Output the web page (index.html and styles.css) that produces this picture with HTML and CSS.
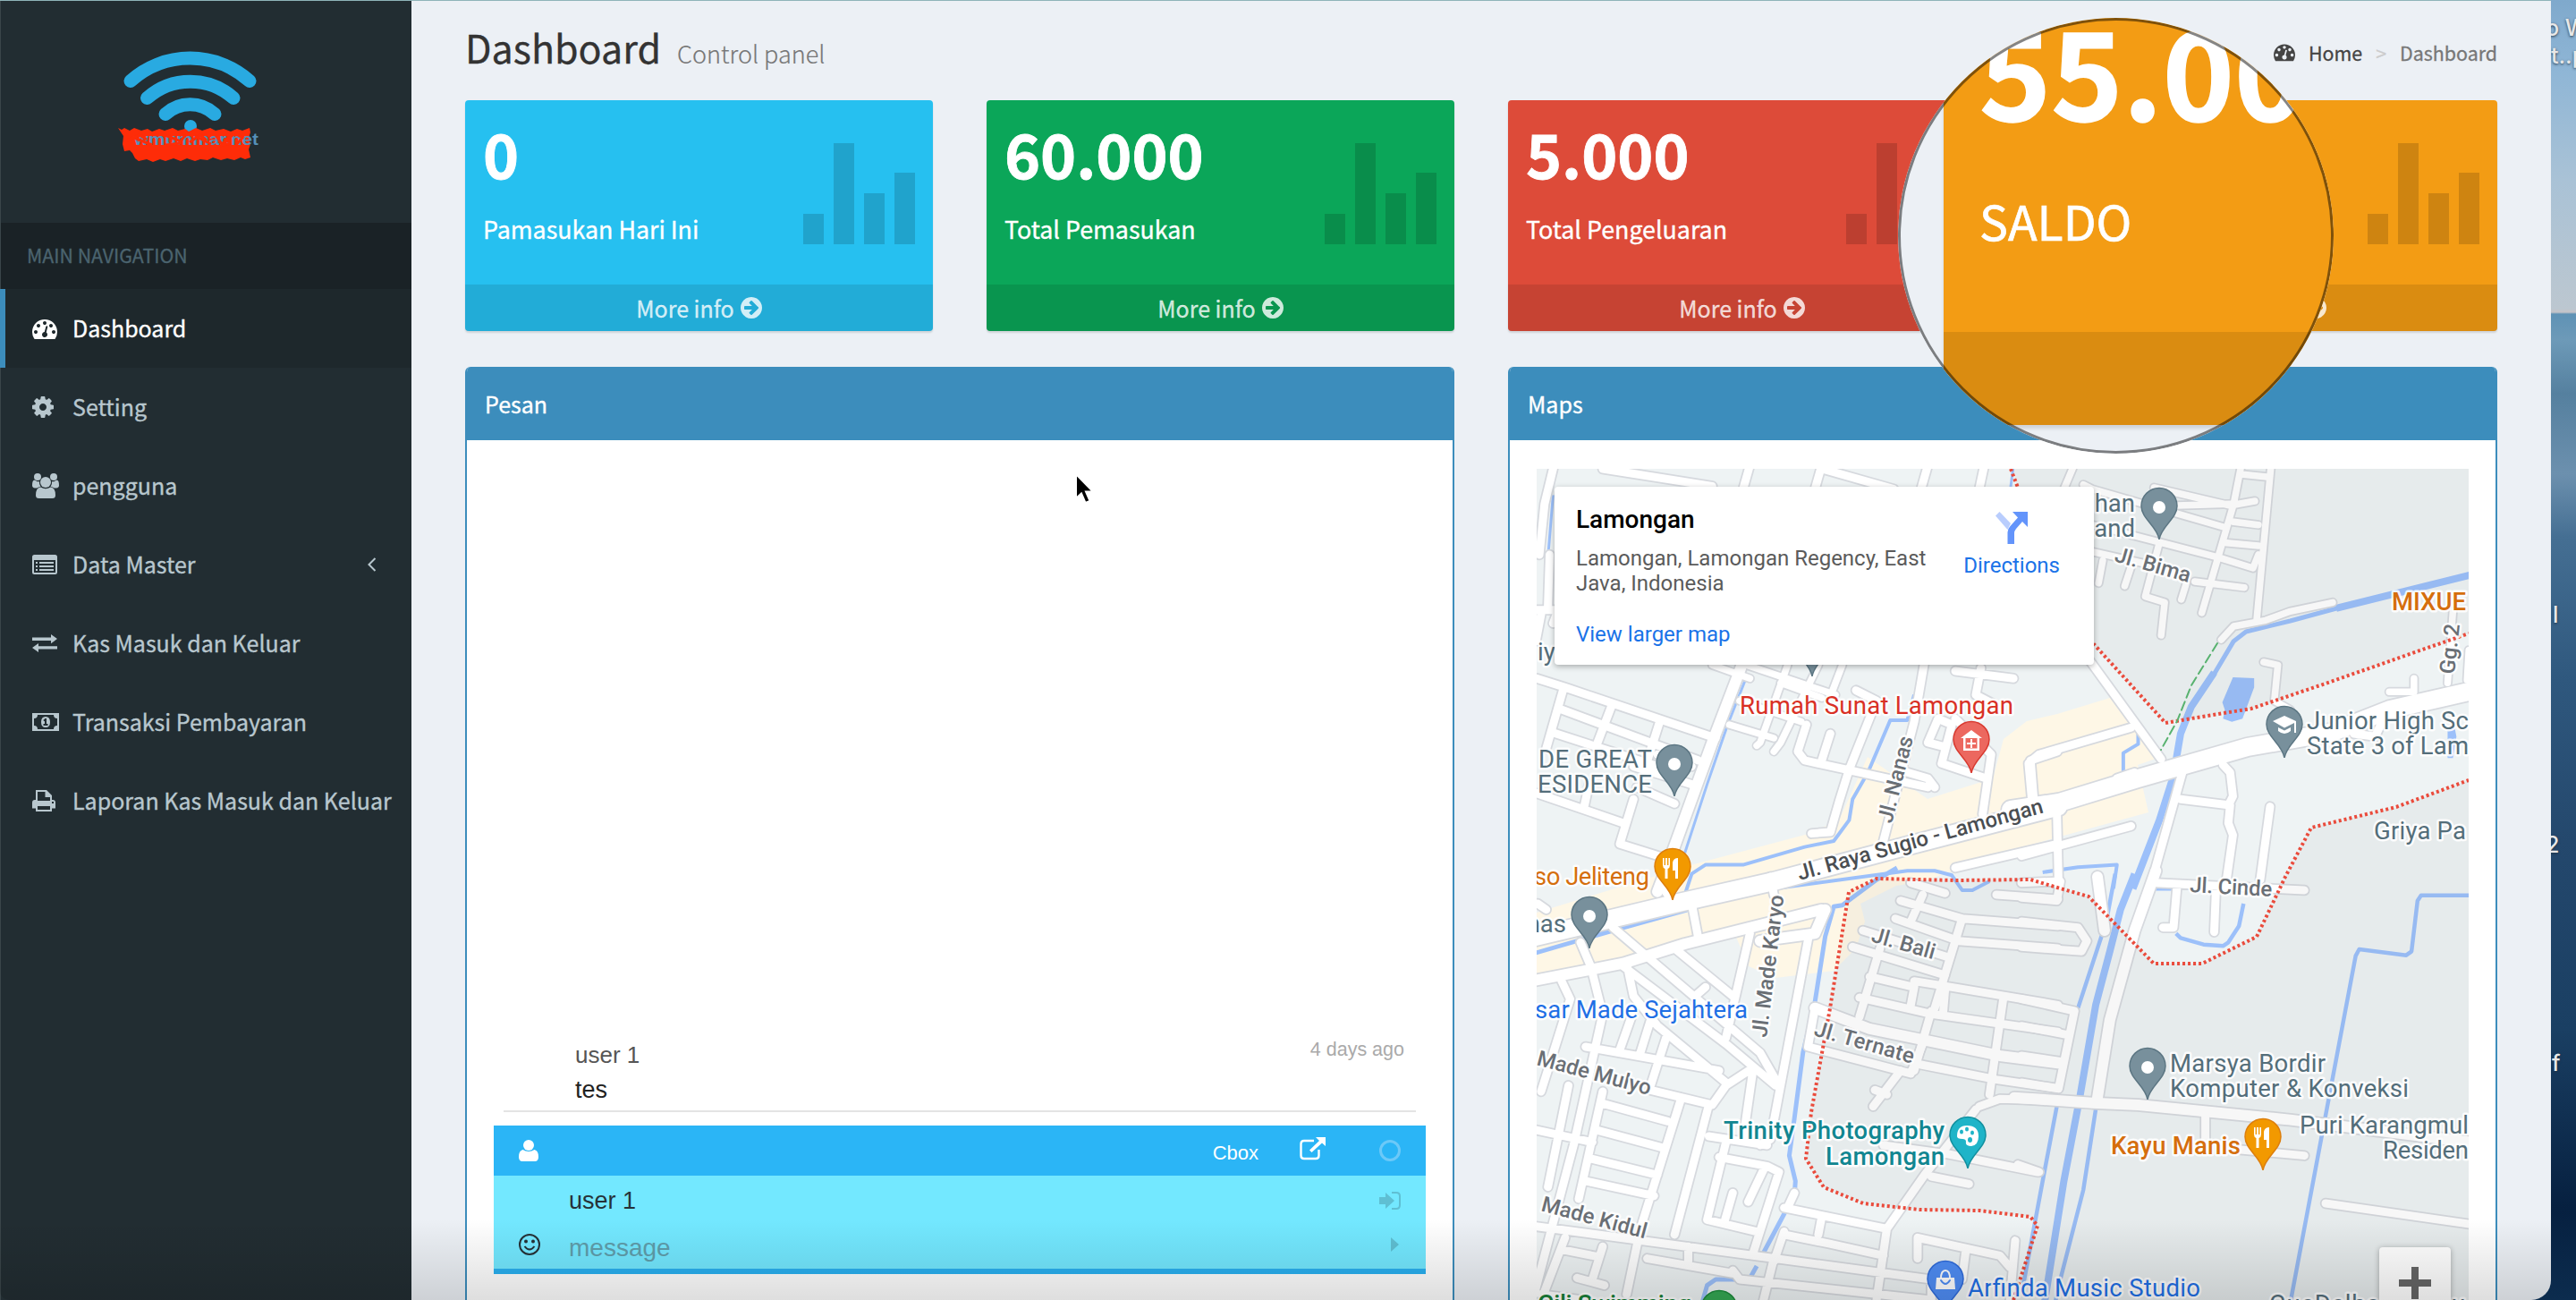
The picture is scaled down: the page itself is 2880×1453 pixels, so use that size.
FILE: index.html
```html
<!DOCTYPE html>
<html lang="id">
<head>
<meta charset="utf-8">
<title>Dashboard</title>
<link rel="stylesheet" href="styles.css">
</head>
<body>
<svg class="defs" width="0" height="0">
  <symbol id="i-tach" viewBox="0 0 1792 1792"><path d="M384 1152q0-53-37.5-90.5t-90.5-37.5-90.5 37.5-37.5 90.5 37.5 90.5 90.5 37.5 90.5-37.5 37.5-90.5zm192-448q0-53-37.5-90.5t-90.5-37.5-90.5 37.5-37.5 90.5 37.5 90.5 90.5 37.5 90.5-37.5 37.5-90.5zm428 481l101-382q6-26-7.5-48.5t-38.5-29.5-48 6.5-30 39.5l-101 382q-60 5-107 43.5t-63 98.5q-20 77 20 146t117 89 146-20 89-117q16-60-6-117t-72-91zm660-33q0-53-37.5-90.5t-90.5-37.5-90.5 37.5-37.5 90.5 37.5 90.5 90.5 37.5 90.5-37.5 37.5-90.5zm-640-640q0-53-37.5-90.5t-90.5-37.5-90.5 37.5-37.5 90.5 37.5 90.5 90.5 37.5 90.5-37.5 37.5-90.5zm448 192q0-53-37.5-90.5t-90.5-37.5-90.5 37.5-37.5 90.5 37.5 90.5 90.5 37.5 90.5-37.5 37.5-90.5zm320 448q0 261-141 483-19 29-54 29h-1402q-35 0-54-29-141-221-141-483 0-182 71-348t191-286 286-191 348-71 348 71 286 191 191 286 71 348z"/></symbol>
  <symbol id="i-cog" viewBox="128 0 1792 1792"><path d="M1152 896q0-106-75-181t-181-75-181 75-75 181 75 181 181 75 181-75 75-181zm512-109v222q0 12-8 23t-20 13l-185 28q-19 54-39 91 35 50 107 138 10 12 10 25t-9 23q-27 37-99 108t-94 71q-12 0-26-9l-138-108q-44 23-91 38-16 136-29 186-7 28-36 28h-222q-14 0-24.5-8.5t-11.5-21.5l-28-184q-49-16-90-37l-141 107q-10 9-25 9-14 0-25-11-126-114-165-168-7-10-7-23 0-12 8-23 15-21 51-66.5t54-70.5q-27-50-41-99l-183-27q-13-2-21-12.5t-8-23.5v-222q0-12 8-23t19-13l186-28q14-46 39-92-40-57-107-138-10-12-10-24 0-10 9-23 26-36 98.500-107.500t94.500-71.500q13 0 26 10l138 107q44-23 91-38 16-136 29-186 7-28 36-28h222q14 0 24.500 8.500t11.500 21.500l28 184q49 16 90 37l142-107q9-9 24-9 13 0 25 10 129 119 165 170 7 8 7 22 0 12-8 23-15 21-51 66.500t-54 70.500q26 50 41 98l183 28q13 2 21 12.500t8 23.500z"/></symbol>
  <symbol id="i-go" viewBox="128 128 1536 1536"><path d="M1413 896q0-27-18-45l-91-91-362-362q-18-18-45-18t-45 18l-91 91q-18 18-18 45t18 45l189 189h-502q-26 0-45 19t-19 45v128q0 26 19 45t45 19h502l-189 189q-19 19-19 45t19 45l91 91q18 18 45 18t45-18l362-362 91-91q18-18 18-45zm251 0q0 209-103 385.5t-279.5 279.5-385.5 103-385.5-103-279.5-279.5-103-385.5 103-385.500 279.500-279.500 385.500-103 385.500 103 279.500 279.500 103 385.500z"/></symbol>
  <symbol id="i-users" viewBox="0 0 30 28"><circle cx="6" cy="4" r="4"/><circle cx="24" cy="4" r="4"/><path d="M4.500 8.500Q6 9.600 8 9.300Q7.500 12.500 9.500 15Q7 15 5.500 16.500H3Q0 16 0 13.500Q0 7.500 2.500 7.500zM25.500 8.500Q24 9.600 22 9.300Q22.500 12.500 20.500 15Q23 15 24.500 16.500H27Q30 16 30 13.500Q30 7.500 27.500 7.500z"/><circle cx="15" cy="10" r="6"/><path d="M9.500 15.500Q15 19 20.500 15.500Q26 16 26 24.500Q26 28 22.500 28H7.500Q4 28 4 24.500Q4 16 9.500 15.500z"/></symbol>
  <symbol id="i-list" viewBox="0 0 28 22"><path fill-rule="evenodd" d="M2.500 0h23Q28 0 28 2.500v17Q28 22 25.500 22h-23Q0 22 0 19.500v-17Q0 0 2.500 0zM2 6v13.500q0 .5.5.5h23q.5 0 .5-.5V6z"/><path d="M4 8h2v2H4zM4 12h2v2H4zM4 16h2v2H4zM8 8h16v2H8zM8 12h16v2H8zM8 16h16v2H8z"/></symbol>
  <symbol id="i-swap" viewBox="0 0 28 20"><path d="M0 3.500h21V0l7 5-7 5.200V7H0zM28 13.200H7V10l-7 5 7 5v-3.500h21z"/></symbol>
  <symbol id="i-money" viewBox="0 0 30 20"><path fill-rule="evenodd" d="M0 0h30v20H0zM6 2A4 4 0 0 1 2 6v8A4 4 0 0 1 6 18h18A4 4 0 0 1 28 14V6A4 4 0 0 1 24 2zM15 4q5 0 5 6t-5 6-5-6 5-6zM12.500 12v2h5v-2H16V6h-1.500L12.300 8l1.200 1.300.5-.4V12z"/></symbol>
  <symbol id="i-print" viewBox="0 0 26 24"><path fill-rule="evenodd" d="M4 0h12l6 6v5h1q3 0 3 3v6.500h-4V24H4v-3.500H0V14q0-3 3-3h1zM6 2v10h14V8h-5.500V2zM6 18v4h14v-4zM22 13v2h2v-2z"/></symbol>
  <symbol id="i-pin" viewBox="-22 -60 44 62" overflow="visible"><path d="M0 0C-2-15-20-23-20-37.500A20 20 0 0 1 20-37.500C20-23 2-15 0 0Z"/></symbol>
  <symbol id="i-fork" viewBox="0 0 20 24" overflow="visible"><path fill="#fff" d="M1 0h1.600v8H4V0h2v8h1.400V0H9v8q0 3-2.500 4v11h-3V12Q1 11 1 8zM18 0v23h-3v-9h-3V5q1-5 6-5z"/></symbol>
</svg>

<div class="screen">
  <aside class="sidebar">
    <div class="brand">
      <svg viewBox="0 0 180 130" width="180" height="130">
        <g fill="none" stroke="#29aae1" stroke-width="15" stroke-linecap="round"><path d="M26 39.500A99.700 99.700 0 0 1 159 39.500"/><path d="M44.500 58.500A72.600 72.600 0 0 1 141 58.500"/><path d="M65 76.500A40.700 40.700 0 0 1 120 76.500"/></g>
        <circle cx="93" cy="90" r="7" fill="#29aae1"/>
        <path fill="#fe2c08" d="M12 92l4 2 3-2 6 3 5-3 8 3 7-2 5 3 8-3 6 2 9-3 6 3 8-2 4 3 8-4 7 3 9-3 6 3 9-2 8 3 7-3 6 2 8-3 1 5-2 6 2 7-2 6 2 9-6 2-5-2-7 3-8-2-7 2-9-3-6 3-8-1-6 2-9-3-7 3-8-3-9 3-6-2-8 3-7-3-9 2-4-3-3-6-3-3-6 1-2-8 1-9z"/>
        <text x="30" y="111" class="brand-name" textLength="139" lengthAdjust="spacingAndGlyphs">wmummar.net</text>
        <g stroke="#fe2c08" stroke-width="3" fill="none"><path d="M22 106l14-6 8 5M62 99l20 8 5-7M92 108l12-8 7 6M121 100l7 10 12-10M126 112l12-3M143 98l8 5-7 8M30 103l20 8M66 111l16-2M98 101l18 9"/></g>
      </svg>
    </div>
    <div class="nav-head">MAIN NAVIGATION</div>
    <nav>
      <a class="active"><svg class="tach"><use href="#i-tach"/></svg><span>Dashboard</span></a>
      <a><svg><use href="#i-cog"/></svg><span>Setting</span></a>
      <a><svg class="w30"><use href="#i-users"/></svg><span>pengguna</span></a>
      <a><svg class="h22"><use href="#i-list"/></svg><span>Data Master</span><svg class="caret" viewBox="0 0 10 16"><path d="M8.500 1L1.500 8l7 7" fill="none" stroke="currentColor" stroke-width="2"/></svg></a>
      <a><svg class="h20"><use href="#i-swap"/></svg><span>Kas Masuk dan Keluar</span></a>
      <a><svg class="w30 h20"><use href="#i-money"/></svg><span>Transaksi Pembayaran</span></a>
      <a><svg class="w26"><use href="#i-print"/></svg><span>Laporan Kas Masuk dan Keluar</span></a>
    </nav>
  </aside>

  <main>
    <header>
      <h1>Dashboard</h1><small>Control panel</small>
      <div class="crumbs"><svg><use href="#i-tach"/></svg><b>Home</b><i>&gt;</i><span>Dashboard</span></div>
    </header>
    <section class="cards">
      <article class="card aqua"><div class="inner"><h3>0</h3><p>Pamasukan Hari Ini</p><div class="bars"><i></i><i></i><i></i><i></i></div></div><footer>More info <svg><use href="#i-go"/></svg></footer></article>
      <article class="card green"><div class="inner"><h3>60.000</h3><p>Total Pemasukan</p><div class="bars"><i></i><i></i><i></i><i></i></div></div><footer>More info <svg><use href="#i-go"/></svg></footer></article>
      <article class="card red"><div class="inner"><h3>5.000</h3><p>Total Pengeluaran</p><div class="bars"><i></i><i></i><i></i><i></i></div></div><footer>More info <svg><use href="#i-go"/></svg></footer></article>
      <article class="card orange"><div class="inner"><div class="bars"><i></i><i></i><i></i><i></i></div></div><footer><span class="ghost">More info</span> <svg><use href="#i-go"/></svg></footer></article>
    </section>
    <section class="panels">
      <article class="panel">
        <h2>Pesan</h2>
        <div class="chat">
          <div class="msg"><div><p class="who">user 1</p><p class="body">tes</p></div><time>4 days ago</time></div>
          <div class="chatbar">
            <svg class="person" viewBox="0 0 22 24"><circle cx="11" cy="6" r="6"/><path d="M4.500 11Q11 15 17.500 11Q22 12 22 19Q22 24 18 24H4Q0 24 0 19Q0 12 4.500 11z"/></svg>
            <span>Cbox</span>
            <svg class="ext" viewBox="0 0 29 26"><path d="M16 4H5Q1.500 4 1.500 7.500v13Q1.500 24 5 24h13q3.500 0 3.500-3.500V14" fill="none" stroke="#fff" stroke-width="2.400"/><path d="M18 0h11v10l-4-3.500L13.500 17 11 14.500 22 4z"/></svg>
            <svg class="ring" viewBox="0 0 24 24"><circle cx="12" cy="12" r="10.500" fill="none" stroke="#6cc9f8" stroke-width="3"/></svg>
          </div>
          <div class="compose">
            <div class="row name"><span>user 1</span><svg width="24" height="20" viewBox="0 0 24 20"><path d="M0 6h7V1l10 9-10 9v-5H0z"/><path d="M14 1h5q4 0 4 4v10q0 4-4 4h-5" fill="none" stroke="#5fbfd3" stroke-width="2"/></svg></div>
            <div class="row text"><svg class="smile" width="24" height="24" viewBox="0 0 24 24"><g fill="none" stroke="#263238" stroke-width="2"><circle cx="12" cy="12" r="11"/><path d="M6.500 14q5.500 7 11 0"/></g><circle cx="8" cy="8.500" r="2" fill="#263238"/><circle cx="16" cy="8.500" r="2" fill="#263238"/></svg><span>message</span><svg class="send" width="10" height="16" viewBox="0 0 10 16"><path d="M0 0l9 8-9 8z"/></svg></div>
          </div>
        </div>
      </article>
      <article class="panel">
        <h2>Maps</h2>
        <div class="map">
          <svg class="tiles" viewBox="1718 524 1042 929" width="1042" height="929">
            <defs>
              <g id="roads">
                <g transform="matrix(.3827 0 0 .3333 1700 510)">
                  <path class="m" d="M95 42L70 160 55 330M85 330L80 500M240 42L560 100M670 30L650 110M880 30L860 110M890 45L1090 110M1190 30L1170 110M1355 30L1340 110M40 515H110L95 560M60 530L45 620"/>
                  <path class="m" d="M47 745L130 775 570 945M125 780L75 980M110 845L520 1020M90 925L400 1040M265 840L225 960M405 895L365 1040M400 1000L500 1040M330 1040L500 1100M47 1130L300 1230M200 1100L185 1180M330 1150L290 1300 430 1350M340 1110L450 1165"/>
                  <path class="w" d="M650 690L560 960 430 1370 400 1460"/>
                  <path class="s" d="M560 700L670 745M660 700L920 800M780 700L700 960 690 970M870 700L760 960 740 990M640 820L820 890M610 900L740 945M940 700L910 790M760 760L880 810"/>
                  <path class="m" d="M980 785L1040 820 960 1050 930 1160 905 1260 850 1265M835 900L810 990 830 1020 1190 1110M905 930L880 1020M1210 1110L1190 1080 1130 1060M1180 690L1150 890 1060 1290M1190 960L1220 880 1260 900 1230 1030 1360 1080M1190 960L1240 975M1270 720L1440 745M1345 710L1330 800 1380 830M1270 880L1375 1000 1350 1200M1500 1160L1490 1020 1568 990M1270 1380L1568 1300"/>
                </g>
                <g transform="matrix(.3954 0 0 .3333 2260 510)">
                  <path class="s" d="M145 40L120 110M620 40L600 160 510 525M705 40L665 550M620 60L700 70M375 105L590 165 660 150M440 165L590 160M175 95L200 110 580 240M600 220L670 230M580 290L670 300M200 230L560 340 655 375 670 330M200 320L350 360M390 290L350 470 405 490 395 600M230 350L218 425M310 370L292 435M465 430L452 480M490 420L630 440M565 615L600 570 690 550 760 520 880 490M685 690L725 700 715 820 760 850M1220 520L1205 760M1265 650L1260 750M1040 790H1110V745"/>
                  <path class="m" d="M190 680L395 1015M30 1160L20 1030 50 1000 310 910M270 1080L320 1060M100 1180L105 1440M0 1340L310 1240M455 1060L365 1440M570 1035L590 1060 598 1140 585 1170M450 1150L590 1170 585 1230 598 1270 580 1420M703 1175L675 1420M940 930L1000 940 1020 890"/>
                  <path class="l" d="M-30 1185L110 1160 330 1080 640 975 880 925 1040 850 1280 785"/>
                </g>
                <g transform="matrix(.3827 0 0 .3333 1700 980)">
                  <path class="l" d="M30 205L250 145 470 85 740 15 1100-95 1570-235"/>
                  <path class="w" d="M30 350L300 290 480 225 880 110M700 215L860 190 890 110"/>
                  <path class="m" d="M500 90L520 210M175 220L205 300 240 460 155 900 40 1400M730 0L740 60M270 170L700 590 745 680M310 290L330 400 400 500 600 690M450 240L620 400M300 300L600 560 745 700M540 370L510 400M670 190L600 540M840 210L730 880 700 900M410 25L430 60M50 90L75 110M120 350L145 410 60 720M330 450L290 580M380 480L350 590M425 540L380 700M190 570L580 650M380 715L560 765 600 700 680 640 650 880M30 845L210 890M140 700L80 1040M240 760L430 820M225 850L420 910M205 945L400 1000M190 1020L390 1070M240 720L170 1080M470 740L350 1180 310 1400M550 765L450 1200M550 870L720 900M600 890L545 1150 690 1190M580 940L720 970 755 990 680 1260M715 970L665 1090M620 1060L595 1160M30 1170L1200 1350 1200 1419M130 1210L70 1390M120 1250L230 1275M240 1240L210 1350M165 1345L245 1370M490 1240V1290M740 1280L710 1419M770 1190L740 1290M770 1200L900 1230 1060 1270M770 1110L1070 1180 1040 1419M800 1060L780 1110M880 1140L870 1200M1070 1180L1180 1000 1330 780M1160 1280V1210L1400 1270 1430 1310M1445 1220L1430 1419M1300 1260L1290 1350M60 1400L180 1419M370 1280L620 1330M620 1320L640 1350 1200 1419M860 440L840 570 1140 660 1175 560"/>
                  <path class="w" d="M860 440L1020 510 1400 600 1570 625"/>
                  <path class="m" d="M1110 80L1290 140 1570 165M1140 20L1240 55M1175 60L1140 150M1095 140L1280 215 1570 240M1000 180L1250 270M1290 140L1210 440M970 235L1240 330M1050 240L990 470M1020 335L1150 370 1140 430M1150 350L1260 370 1570 430M1240 380L1235 450M990 405L1200 460 1570 520M1200 450L1150 650M1170 630L1390 680 1570 710M1410 410L1370 730M1390 60L1570 75M1110 650L1030 770M1035 715L1070 730M1340 770L1400 745 1570 750M1060 900L1250 930 1510 990M1200 1005L1310 1030"/>
                </g>
                <g transform="matrix(.3954 0 0 .3333 2260 980)">
                  <path class="w" d="M380-20L320 180 250 480 215 740M215 0L235 180"/>
                  <path class="m" d="M0 20L110 15 100 80 0 70M0 150L160 170 185 215 170 250 0 235M0 410L150 450 105 710 0 690M0 500L130 530M0 600L115 620M380 20L800 45M440 30L430 170H400M550 40L545 185M520 800V880M620 915L800 935M860 1095L1270 1165M-10 965L50 990"/>
                  <path class="w" d="M-20 740L200 758 330 765 760 815 1270 890"/>
                </g>
              </g>
            </defs>
            <rect x="1718" y="524" width="1042" height="929" fill="#eef3f4"/>
            <path fill="#fef7e6" d="M1718 1020L1890 967 2018 933 2056 917 2088 846 2155 893 2228 870 2240 826 2266 806 2300 798 2359 780 2410 848 2390 855 2402 908 2260 947 2150 985 2120 990 2080 1010 2085 1030 2075 1060 2050 1085 1985 1093 1955 1080 1940 1045 1718 1095z"/>
            <g class="water">
              <g transform="matrix(.3827 0 0 .3333 1700 510)">
                <path d="M95 130L70 480M660 740L605 900 545 1100 480 1330M1440 30L1430 120" stroke-width="3"/>
                <path d="M1150 800L1130 885H1080L1015 1060 970 1150 960 1220 915 1290 830 1310 650 1370H540L500 1400 480 1470" stroke-width="4"/>
                <path d="M740 1450L1130 1390H1210L1260 1405 1290 1455H1320L1370 1425" stroke-width="4"/>
              </g>
              <g transform="matrix(.3827 0 0 .3333 1700 980)" stroke-width="5">
                <path d="M30 260L270 180 490 110 800 0M1100-30L1040 10 940 95 915 100 890 200 860 420 825 590 800 810 785 935 803 1020 800 1070M775 1120L710 1260M690 1305L668 1350H570L545 1370 530 1430"/>
              </g>
              <g transform="matrix(.3954 0 0 .3333 2260 510)">
                <path d="M1270 398L890 510" stroke-width="8"/><path d="M900 507L760 552 635 588 600 620 540 740" stroke-width="5"/><path d="M545 725L480 840 450 930 437 1020 425 1090 390 1220 315 1450" stroke-width="8"/>
                <path d="M330 930V965L288 995V1060M60 1395L160 1378 270 1370 260 1450" stroke-width="4"/>
                <path d="M598 741L658 744V775L625 880 595 890 570 880 575 850 568 825zM1205 910H1225L1230 940 1220 1012H1205z" fill="#9cc0fa" stroke="none"/>
              </g>
              <g transform="matrix(.3954 0 0 .3333 2260 980)">
                <path d="M320-10L280 110 250 250 210 430 165 740 120 1020 65 1430" stroke-width="8"/>
                <path d="M265-10L240 150 160 440M100 770L60 1020 5 1370M210 780L175 1050 110 1350 95 1430M1270 62H1130L1120 80 1103 250 1088 263 955 243 945 265 760 1430M375 40H430V110M437 190L450 205 515 227 570 232 585 220 615 165 628 90" stroke-width="4.500"/>
              </g>
            </g>
            <use href="#roads" class="casing"/>
            <use href="#roads" class="fill"/>
            <path class="dim" d="M2248 524L2256 545 2341 720 2421 808 2450 803 2517 792 2600 764 2760 708V524zM2251 1453L2278 1370 2270 1360 2213 1353 2146 1352 2083 1345 2039 1327 2019 1295 2025 1243 2046 1127 2067 997 2098 982 2186 984 2270 983 2300 992 2335 1002 2408 1077H2462L2523 1047 2555 980 2584 925 2679 902 2760 872V1453z"/>
            <path class="border" d="M2248 524L2256 545 2341 720 2421 808 2450 803 2517 792 2600 764 2760 708M2251 1453L2278 1370 2270 1360 2213 1353 2146 1352 2083 1345 2039 1327 2019 1295 2025 1243 2046 1127 2067 997 2098 982 2186 984 2270 983 2300 992 2335 1002 2408 1077H2462L2523 1047 2555 980 2584 925 2679 902 2760 872"/>
            <path d="M2479 719L2450 766 2434 806 2416 838" fill="none" stroke="#58b26f" stroke-width="2" stroke-dasharray="10 5"/>

            <g class="pins">
              <g fill="#78909c" stroke="#5c7683"><use href="#i-pin" x="2392" y="543" width="44" height="62"/><use href="#i-pin" x="1850" y="830" width="44" height="62"/><use href="#i-pin" x="1755" y="1000" width="44" height="62"/><use href="#i-pin" x="2379" y="1169" width="44" height="62"/><use href="#i-pin" x="2532" y="787" width="44" height="62"/><use href="#i-pin" x="2004" y="696" width="44" height="62"/></g>
              <use href="#i-pin" x="2182" y="804" width="44" height="62" fill="#ec685f" stroke="#d93a30"/>
              <use href="#i-pin" x="1848" y="946" width="44" height="62" fill="#f29900" stroke="#dd7e0c"/>
              <use href="#i-pin" x="2508" y="1248" width="44" height="62" fill="#f29900" stroke="#dd7e0c"/>
              <use href="#i-pin" x="2178" y="1246" width="44" height="62" fill="#1fb4c8" stroke="#12909f"/>
              <use href="#i-pin" x="2153" y="1407" width="44" height="62" fill="#4f8df5" stroke="#2f6bdb"/>
              <use href="#i-pin" x="1900" y="1440" width="44" height="62" fill="#34a853" stroke="#1c8a3b"/>
              <g fill="#fff"><circle cx="2414" cy="567" r="7"/><circle cx="1872" cy="854" r="7"/><circle cx="1777" cy="1024" r="7"/><circle cx="2401" cy="1193" r="7"/>
                <path d="M2541 806l13-6 13 6v13h-2v-11l-11 5.500zM2547 813l7 3.500 7-3.500v4q-7 6-14 0z"/>
                <path fill-rule="evenodd" d="M2204 816l12 9h-3v14h-18v-14h-3zM2197.500 825v11.500h13V825zM2203 826h2v4h4v2h-4v4h-2v-4h-4v-2h4z"/>
                <path fill-rule="evenodd" d="M2188 1270q0-12 11-12 13 0 13 12 0 10-8 11-7 0-6-5 0-3-4-3-6 0-6-3zM2191 1265a2 2.500 0 1 0 4 0 2 2.500 0 1 0-4 0zM2197 1262a2 2.500 0 1 0 4 0 2 2.500 0 1 0-4 0zM2203 1266a2 2.500 0 1 0 4 0 2 2.500 0 1 0-4 0zM2200 1274a2.500 3 0 1 0 5 0 2.500 3 0 1 0-5 0z"/>
                <path d="M2165 1428h20l1 13h-22z"/><path d="M2170 1429q0-9 5-9t5 9" fill="none" stroke="#fff" stroke-width="2"/><path d="M2170 1431q5 8 10 0" fill="none" stroke="#4f8df5" stroke-width="2"/></g>
              <use href="#i-fork" x="1858" y="959" width="20" height="24"/><use href="#i-fork" x="2519" y="1260" width="20" height="24"/>
            </g>

            <g class="labels">
              <g class="poi">
                <text x="2387" y="572" text-anchor="end">han</text><text x="2387" y="600" text-anchor="end">Land</text>
                <text x="2579" y="815" textLength="181">Junior High Sc</text><text x="2579" y="843" textLength="181">State 3 of Lam</text>
                <text x="2654" y="938" textLength="103">Griya Pa</text>
                <text x="2426" y="1198" textLength="174">Marsya Bordir</text><text x="2426" y="1226" textLength="267">Komputer &amp; Konveksi</text>
                <text x="2571" y="1267" textLength="189">Puri Karangmul</text><text x="2664" y="1295" textLength="96">Residen</text>
                <text x="2537" y="1467" textLength="218">GueDelhomestay</text>
                <text x="1719" y="738">iy</text><text x="1720" y="858" textLength="127">DE GREAT</text><text x="1719" y="886" textLength="128">ESIDENCE</text><text x="1751" y="1042" text-anchor="end">nas</text>
              </g>
              <g class="food"><text class="b" x="2674" y="682" textLength="83">MIXUE</text><text x="1715" y="989" textLength="129">so Jeliteng</text><text class="b" x="2360" y="1290" textLength="145">Kayu Manis</text></g>
              <text fill="#d93025" x="1945" y="798" textLength="306">Rumah Sunat Lamongan</text>
              <g class="shop"><text x="1716" y="1138" textLength="238">sar Made Sejahtera</text><text x="2200" y="1449" textLength="260">Arfinda Music Studio</text></g>
              <g class="photo b"><text x="1927" y="1273" textLength="247">Trinity Photography</text><text x="2041" y="1302" textLength="133">Lamongan</text></g>
              <text class="b" fill="#188038" x="1719" y="1467" textLength="172">Gili Swimming</text>
              <g class="street">
                <text transform="translate(2363 627) rotate(16)" textLength="87">Jl. Bima</text>
                <text transform="translate(2744 754) rotate(-84)" textLength="56">Gg. 2</text>
                <text transform="translate(2448 997) rotate(3)" textLength="92">Jl. Cinde</text>
                <text transform="translate(2115 921) rotate(-76)" textLength="99">Jl. Nanas</text>
                <text class="major" transform="translate(2012 984) rotate(-15.500)" textLength="284">Jl. Raya Sugio - Lamongan</text>
                <text transform="translate(1975 1160) rotate(-83)" textLength="160">Jl. Made Karyo</text>
                <text transform="translate(2091 1052) rotate(16)" textLength="73">Jl. Bali</text>
                <text transform="translate(2027 1157) rotate(16)" textLength="115">Jl. Ternate</text>
                <text transform="translate(1717 1190) rotate(15)" textLength="131">Made Mulyo</text>
                <text transform="translate(1722 1353) rotate(15)" textLength="121">Made Kidul</text>
              </g>
            </g>
          </svg>
          <div class="place">
            <div class="place-text"><h4>Lamongan</h4><p>Lamongan, Lamongan Regency, East<br>Java, Indonesia</p><a>View larger map</a></div>
            <div class="dir"><svg viewBox="0 0 36 36" width="36" height="36"><path d="M0 4.500L4.500 0 17 13l-3.500 7z" fill="#b9cdfd"/><path d="M13.500 36V23q0-4 3-7l8.500-9.500L19 0h17v17l-6-6-7 8q-2 2.500-2 5v12z" fill="#6394fb"/></svg><a>Directions</a></div>
          </div>
          <div class="zoom-in"></div>
        </div>
      </article>
    </section>
  </main>

  <aside class="desktop">
    <span class="d1">o W</span><span class="d2">t..p</span><span class="d3">l</span><span class="d4">2</span><span class="d5">f</span>
  </aside>
</div>
<div class="shade"></div>
<div class="topline"></div>

<div class="lens">
  <div class="lens-card"><strong>55.000</strong><span>SALDO</span><div class="lens-foot"></div></div>
</div>
<svg class="pointer" viewBox="0 0 22 36" width="22" height="36"><path d="M2 2v27l6-5.500L12.500 34l5-2.200L13 21.500h8z" fill="#000" stroke="#fff" stroke-width="2"/></svg>
</body>
</html>
```
FILE: styles.css
```css
* { box-sizing: border-box; margin: 0; padding: 0; }
body {
  position: relative; width: 2880px; height: 1453px; overflow: hidden;
  font-family: "Noto Sans CJK SC", "Noto Sans", sans-serif; color: #333; background: #12304f;
}
.defs { position: absolute; }
svg { display: block; fill: currentColor; flex: none; }
.screen { display: grid; grid-template-columns: 460px 2392px 28px; height: 1453px; }

/* sidebar */
.sidebar { background: #222d32; border-left: 1px solid #3a4549; }
.brand { height: 249px; padding: 51px 0 0 119px; }
.brand-name { font: bold 19px "Liberation Sans", sans-serif; fill: #5590b8; }
.nav-head { height: 74px; line-height: 72px; padding-left: 29px; background: #1a2226; color: #4b646f; font-size: 21.300px; -webkit-text-stroke: .3px; }
nav a { display: flex; align-items: center; height: 88px; padding-left: 35px; color: #b8c7ce; font-size: 25px; }
nav a svg { width: 28px; height: 28px; }
nav a span { margin-left: 17px; line-height: 86px; height: 88px; white-space: nowrap; -webkit-text-stroke: .35px; }
nav a .w30 { width: 30px; }
nav a .w30 + span { margin-left: 15px; }
nav a .w26 { width: 26px; height: 24px; }
nav a .w26 + span { margin-left: 19px; }
nav a .h22 { height: 22px; }
nav a .h20 { height: 20px; }
nav a .caret { width: 10px; height: 16px; margin: 0 39px 0 auto; }
nav .active { background: #1e282c; color: #fff; border-left: 6px solid #3c8dbc; margin-left: -1px; padding-left: 30px; }

/* content */
main { background: #ecf0f5; padding: 0 60px; border-bottom-right-radius: 22px; overflow: hidden; height: 1453px; }
header { display: flex; height: 112px; align-items: baseline; white-space: nowrap; }
h1 { font-size: 43px; font-weight: 400; line-height: 105px; -webkit-text-stroke: .3px; }
small { font-size: 27px; font-weight: 300; color: #777; margin-left: 18px; -webkit-text-stroke: .2px; }
.crumbs { display: flex; align-items: center; margin-left: auto; height: 112px; align-self: flex-start; padding-top: 4px; font-size: 21.400px; color: #777; -webkit-text-stroke: .3px; }
.crumbs svg { width: 24px; height: 24px; color: #444; margin-right: 15px; }
.crumbs b { font-weight: 400; color: #444; }
.crumbs i { font-style: normal; color: #ccc; margin: 0 15px; }

.cards { display: grid; grid-template-columns: repeat(4, 523px); column-gap: 60px; }
.card { height: 258px; border-radius: 4px; color: #fff; overflow: hidden; box-shadow: 0 2px 2px rgba(0,0,0,.12); display: flex; flex-direction: column; }
.aqua { background: #26c0f0; } .green { background: #0ba659; } .red { background: #dd4b39; } .orange { background: #f39c14; }
.inner { flex: 1; display: grid; grid-template-columns: 1fr auto; grid-template-rows: 124px 1fr; padding: 0 20px; }
.inner h3 { font-size: 68px; line-height: 118px; font-weight: 700; -webkit-text-stroke: .8px; }
.inner p { grid-column: 1; font-size: 26.800px; line-height: 40px; white-space: nowrap; -webkit-text-stroke: .35px; }
.bars { grid-column: 2; grid-row: 1 / 3; display: flex; align-items: flex-end; gap: 10.500px; height: 161px; }
.bars i { width: 23.500px; background: rgba(0,0,0,.15); }
.bars i:nth-child(1) { height: 34px; } .bars i:nth-child(2) { height: 113px; } .bars i:nth-child(3) { height: 57px; } .bars i:nth-child(4) { height: 80px; }
.card footer { height: 52px; background: rgba(0,0,0,.1); color: rgba(255,255,255,.8); display: flex; justify-content: center; align-items: center; gap: 7px; font-size: 25px; line-height: 51px; -webkit-text-stroke: .3px; }
.card footer svg { width: 24px; height: 24px; }
.ghost { visibility: hidden; }

.panels { display: grid; grid-template-columns: 1106px 1106px; column-gap: 60px; margin-top: 40px; }
.panel { height: 1060px; background: #fff; border: 2px solid #3c8dbc; border-top: 0; border-radius: 6px 6px 0 0; overflow: hidden; }
.panel h2 { height: 82px; line-height: 82px; margin: 0 -2px; padding-left: 22px; background: #3c8dbc; color: #fff; font-size: 25px; font-weight: 400; -webkit-text-stroke: .35px; }

/* chat widget */
.chat { padding: 0 30px; font-family: "Liberation Sans", Arial, sans-serif; font-size: 27px; }
.msg { display: flex; justify-content: space-between; height: 111px; margin: 640px 11px 15px; padding: 28px 13px 0 80px; border-bottom: 2px solid #e4e4e4; line-height: 39px; }
.msg .who { color: #555; font-size: 26px; } .msg .body { color: #222; font-size: 27px; }
.msg time { color: #aaa; font-size: 21.500px; line-height: 33px; margin-top: -3px; }
.chatbar { display: flex; align-items: center; height: 56px; background: #2bb5f6; color: #fff; padding: 0 28px; }
.person { width: 22px; height: 24px; }
.chatbar span { margin-left: auto; font-size: 22px; padding-top: 6px; }
.ext { width: 29px; height: 26px; margin: 0 60px 4px 46px; }
.ring { width: 24px; height: 24px; }
.compose { height: 110px; background: #73e8ff; border-bottom: 6px solid #29b0f0; padding-top: 3px; color: #5fbfd3; }
.row { display: flex; align-items: center; justify-content: space-between; height: 50px; padding: 0 28px 0 84px; }
.row.name span { color: #263238; }
.row.text { padding: 0 29px 0 28px; height: 52px; }
.row.text span { color: #5f9dab; margin: 4px auto 0 32px; font-size: 28px; }
.smile { margin-bottom: 5px; }
.send { margin-bottom: 4px; }

/* map */
.map { position: relative; margin: 32px 30px 0; width: 1042px; height: 929px; overflow: hidden; font-family: Roboto, sans-serif; }
.tiles path { stroke-linejoin: round; stroke-linecap: round; vector-effect: non-scaling-stroke; }
.casing, .fill, .water, .water path { fill: none; }
.water path[fill] { fill: #9cc0fa; }
.water path { stroke-linecap: butt; }
.water { stroke: #9cc0fa; }
.casing { stroke: #d6d9de; --edge: 3.500px; }
.fill { stroke: #fff; --edge: 0px; }
.s { stroke-width: calc(7.500px + var(--edge)); }
.m { stroke-width: calc(9px + var(--edge)); }
.w { stroke-width: calc(12px + var(--edge)); }
.l { stroke-width: calc(20px + var(--edge)); }
.dim { fill: rgba(50,50,50,.04); }
.tiles .border { fill: none; stroke: #ea4b3c; stroke-width: 4px; stroke-dasharray: 3 3; stroke-linecap: butt; }
.pins { stroke-width: 1.500px; }
.pins g[fill="#fff"] { stroke: none; }
.labels { font-size: 27.500px; stroke: rgba(255,255,255,.85); stroke-width: 5px; stroke-linejoin: round; }
.labels text { paint-order: stroke; }
.b { font-weight: 500; }
.poi { fill: #546e7a; } .food { fill: #d56e0c; } .shop { fill: #1f6fe5; } .photo { fill: #118691; }
.street { fill: #6a6f75; font-size: 24px; font-weight: 500; }
.major { fill: #4a4e52; }
.place { position: absolute; left: 20px; top: 20px; width: 603px; height: 199px; background: #fff; border-radius: 4px; box-shadow: 0 2px 6px rgba(0,0,0,.3); display: flex; justify-content: space-between; padding: 19px 38px 0 24px; }
.place h4 { font-size: 28px; line-height: 36px; font-weight: 500; color: #000; }
.place p { font-size: 24px; line-height: 28px; color: #5b5b5b; margin-top: 11px; white-space: nowrap; }
.place a { font-size: 24px; line-height: 28px; color: #1a73e8; }
.place-text a { display: block; margin-top: 29px; }
.dir { display: flex; flex-direction: column; align-items: center; padding-top: 9px; }
.dir a { margin-top: 10px; }
.zoom-in { position: absolute; left: 942px; top: 870px; width: 80px; height: 80px; background: #fff; border-radius: 4px; box-shadow: 0 1px 6px rgba(0,0,0,.3); }
.zoom-in::before, .zoom-in::after { content: ""; position: absolute; background: #666; }
.zoom-in::before { left: 22px; top: 36px; width: 36px; height: 8px; }
.zoom-in::after { left: 36px; top: 22px; width: 8px; height: 36px; }

/* desktop behind the window */
.desktop {
  position: relative; overflow: hidden; z-index: -1; margin-left: -22px; width: 50px; color: #e8e8e8; font: 500 25px Inter, sans-serif;
  background: linear-gradient(#7fa9cc 0, #8fb6d6 80px, #a9c2d6 200px, #bcc7d0 345px, #c4c3c8 349px, #5f92b5 351px, #6d9ab8 380px, #55809f 440px, #6c90ae 530px, #456f93 600px, #2f587e 760px, #24486d 940px, #1a3f63 1150px, #062040 1350px, #0c2c4e 1453px);
}
.desktop span { position: absolute; text-shadow: 0 1px 3px #234; white-space: nowrap; }
.d1 { left: 16px; top: 16px; } .d2 { left: 22px; top: 47px; } .d3 { left: 24px; top: 672px; } .d4 { left: 16px; top: 929px; } .d5 { left: 23px; top: 1173px; }
.shade { position: absolute; left: 0; bottom: 0; width: 2852px; height: 90px; background: linear-gradient(rgba(0,0,0,0), rgba(0,0,0,.13)); border-radius: 0 0 22px 10px; }
.topline { position: absolute; left: 0; top: 0; width: 2852px; height: 1px; background: #8fb4b9; }

/* magnifier */
.lens { position: absolute; left: 2122px; top: 20px; width: 487px; height: 487px; border-radius: 50%; overflow: hidden; background: #ecf0f5; }
.lens::after { content: ""; position: absolute; inset: 0; border: 3px solid rgba(0,0,0,.48); border-radius: 50%; }
.lens-card { margin-left: 51px; width: 500px; height: 455px; background: #f39c14; color: #fff; padding-left: 40px; box-shadow: 0 4px 4px rgba(0,0,0,.12); display: flex; flex-direction: column; }
.lens-card strong { font-size: 136px; line-height: 150px; height: 150px; margin-top: -19px; -webkit-text-stroke: 1.500px; }
.lens-card span { font-size: 53.600px; line-height: 80px; margin-top: 55px; -webkit-text-stroke: .7px; }
.lens-foot { height: 104px; background: rgba(0,0,0,.1); margin: auto 0 0 -40px; }
.pointer { position: absolute; left: 1201px; top: 528px; }
```
